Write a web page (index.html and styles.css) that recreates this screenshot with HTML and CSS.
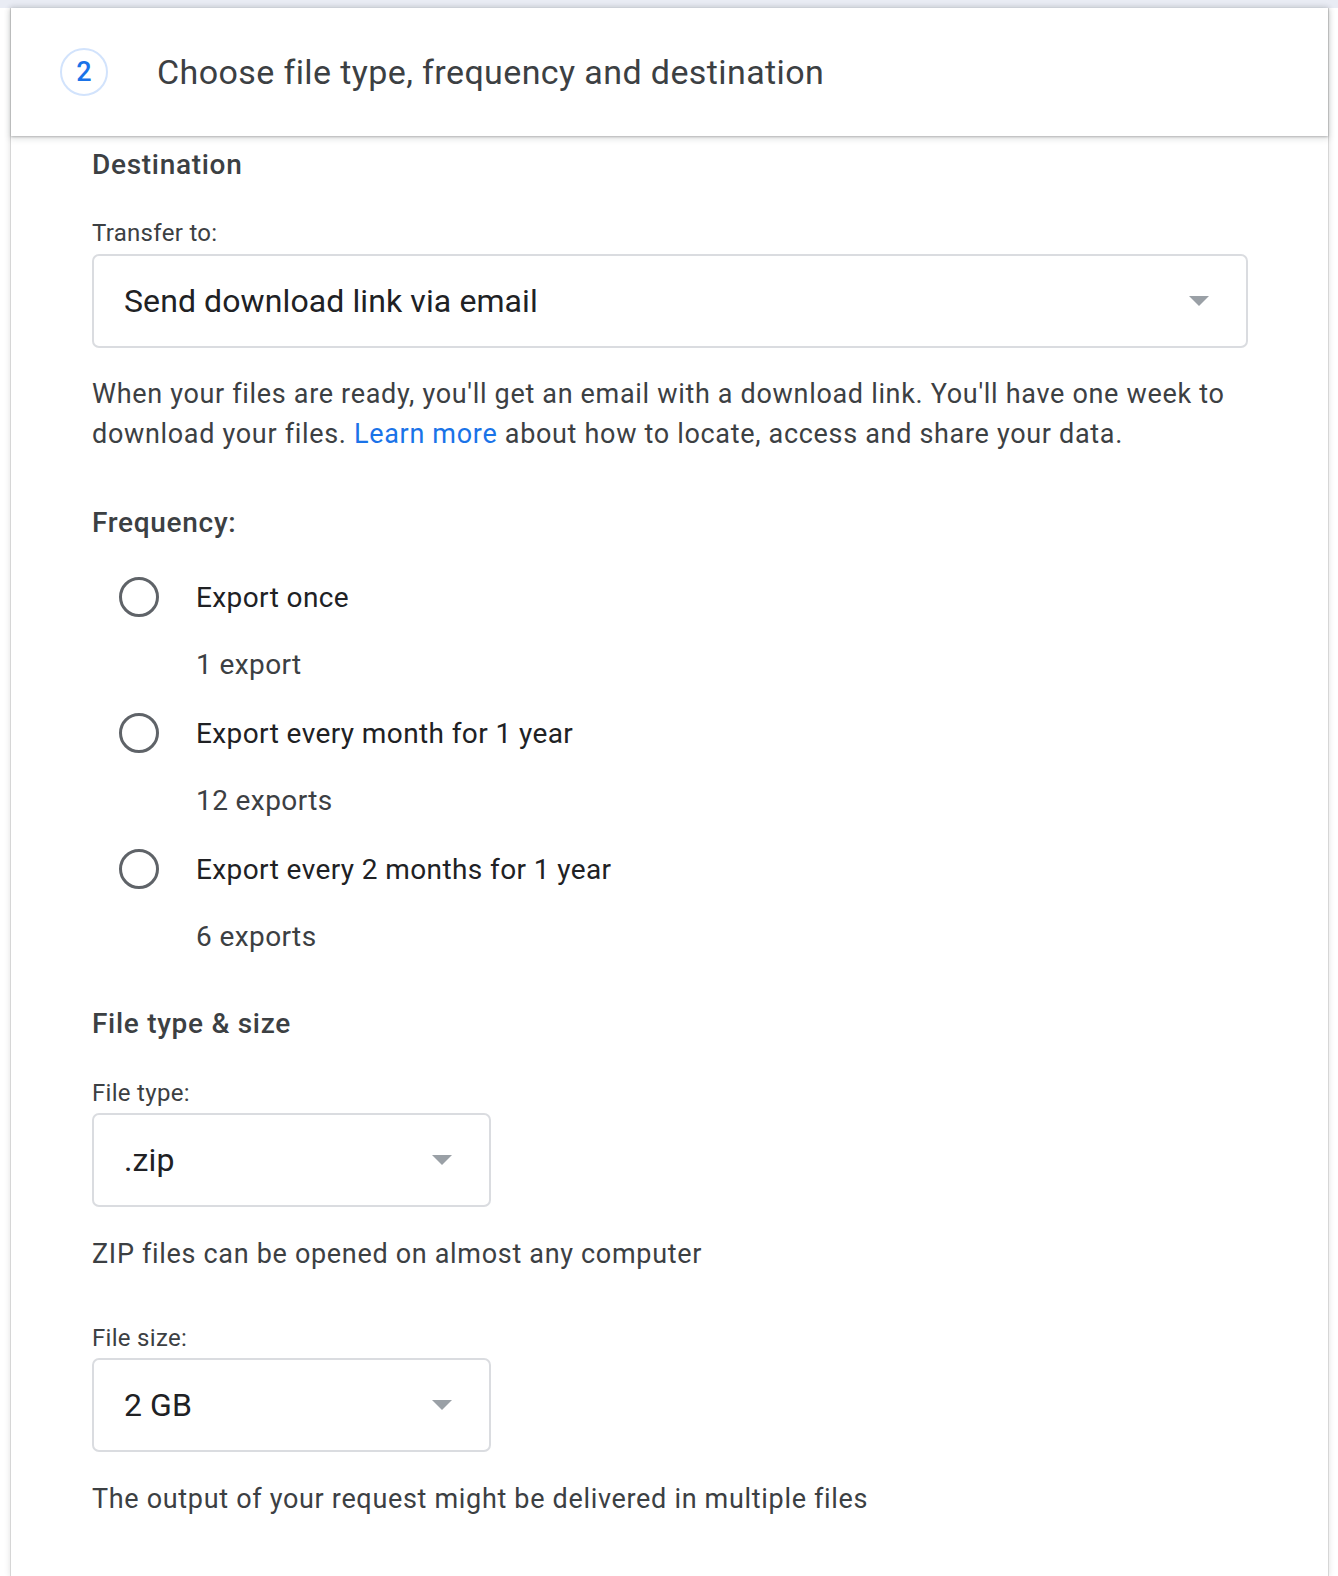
FILE: index.html
```html
<!DOCTYPE html>
<html lang="en">
<head>
<meta charset="utf-8">
<title>Choose file type, frequency and destination</title>
<link rel="stylesheet" href="styles.css">
</head>
<body>
<div class="topbar"></div>
<div class="card">
  <header class="step-header">
    <div class="step-num">2</div>
    <h1 class="step-title">Choose file type, frequency and destination</h1>
  </header>
  <div class="content">
    <h2 class="section-title first">Destination</h2>
    <div class="field-label label-transfer">Transfer to:</div>
    <div class="select select-wide">
      <span class="select-text">Send download link via email</span>
      <span class="select-arrow"></span>
    </div>
    <p class="help help-dest">When your files are ready, you'll get an email with a download link. You'll have one week to download your files. <a class="link" href="#">Learn more</a> about how to locate, access and share your data.</p>

    <h2 class="section-title freq-title">Frequency:</h2>
    <div class="radio-group">
      <div class="radio-row"><span class="radio"></span><span class="radio-label">Export once</span></div>
      <div class="radio-sub">1 export</div>
      <div class="radio-row"><span class="radio"></span><span class="radio-label">Export every month for 1 year</span></div>
      <div class="radio-sub">12 exports</div>
      <div class="radio-row"><span class="radio"></span><span class="radio-label">Export every 2 months for 1 year</span></div>
      <div class="radio-sub">6 exports</div>
    </div>

    <h2 class="section-title type-title">File type &amp; size</h2>
    <div class="field-label label-type">File type:</div>
    <div class="select select-narrow">
      <span class="select-text">.zip</span>
      <span class="select-arrow"></span>
    </div>
    <p class="help help-narrow">ZIP files can be opened on almost any computer</p>

    <div class="field-label label-size">File size:</div>
    <div class="select select-narrow">
      <span class="select-text">2 GB</span>
      <span class="select-arrow"></span>
    </div>
    <p class="help help-narrow">The output of your request might be delivered in multiple files</p>
  </div>
</div>
</body>
</html>
```

FILE: styles.css
```css
html, body {
  margin: 0;
  padding: 0;
  background: #ffffff;
}
body {
  font-family: Roboto, "Open Sans", Arial, sans-serif;
  color: #3c4043;
  width: 1338px;
  min-height: 1576px;
  overflow: hidden;
}
.topbar {
  height: 8px;
  background: #e9ecf4;
}
.card {
  margin-left: 11px;
  width: 1317px;
  min-height: 1568px;
  background: #fff;
  box-shadow: -1px 0 0 #d6d6d6, 1px 0 0 #d6d6d6, 0 0 6px 1px rgba(0, 0, 0, 0.12);
}
.step-header {
  position: relative;
  z-index: 1;
  height: 128px;
  display: flex;
  align-items: center;
  padding-left: 49px;
  background: #fff;
  box-shadow: 0 1px 2px rgba(60, 64, 67, 0.3), 0 2px 6px 1px rgba(60, 64, 67, 0.15);
}
.step-num {
  width: 44px;
  height: 44px;
  border: 2px solid #d2e3fc;
  border-radius: 50%;
  display: flex;
  align-items: center;
  justify-content: center;
  color: #1a73e8;
  font-size: 27px;
  font-weight: 500;
  flex-shrink: 0;
}
.step-title {
  margin: 0 0 0 49px;
  font-size: 34px;
  font-weight: 400;
  color: #3c4043;
  letter-spacing: 0.4px;
}
.content {
  padding: 11px 80px 40px 81px;
}
.section-title {
  margin: 0;
  font-size: 28px;
  line-height: 36px;
  font-weight: 500;
  color: #3c4043;
  letter-spacing: 0.7px;
}
.freq-title { margin-top: 51px; }
.type-title { margin-top: 35px; }
.field-label {
  font-size: 24px;
  line-height: 32px;
  color: #3c4043;
  letter-spacing: 0.3px;
}
.label-transfer { margin-top: 34px; }
.label-type { margin-top: 35px; }
.label-size { margin-top: 48px; }
.select {
  margin-top: 4px;
  height: 94px;
  box-sizing: border-box;
  border: 2px solid #dadce0;
  border-radius: 7px;
  display: flex;
  align-items: center;
  justify-content: space-between;
  padding: 0 37px 0 30px;
}
.select-wide { width: 1156px; margin-top: 5px; }
.select-narrow { width: 399px; }
.select-text {
  font-size: 32px;
  color: #202124;
  letter-spacing: 0.1px;
}
.select-arrow {
  width: 0;
  height: 0;
  border-left: 10px solid transparent;
  border-right: 10px solid transparent;
  border-top: 10px solid #9aa0a6;
}
.help {
  margin: 26px 0 0;
  font-size: 27px;
  line-height: 40px;
  color: #3c4043;
  letter-spacing: 0.68px;
}
.help-dest { width: 1170px; }
.help-narrow { margin-top: 27px; }
.link {
  color: #1a73e8;
  text-decoration: none;
}
.radio-group {
  margin-top: 22px;
}
.radio-row {
  height: 68px;
  display: flex;
  align-items: center;
}
.radio {
  width: 40px;
  height: 40px;
  box-sizing: border-box;
  border: 3px solid #5f6368;
  border-radius: 50%;
  margin-left: 27px;
  flex-shrink: 0;
}
.radio-label {
  margin-left: 37px;
  font-size: 28px;
  color: #202124;
  letter-spacing: 0.4px;
}
.radio-sub {
  height: 68px;
  line-height: 68px;
  padding-left: 104px;
  font-size: 28px;
  color: #3c4043;
  letter-spacing: 0.4px;
}
```
